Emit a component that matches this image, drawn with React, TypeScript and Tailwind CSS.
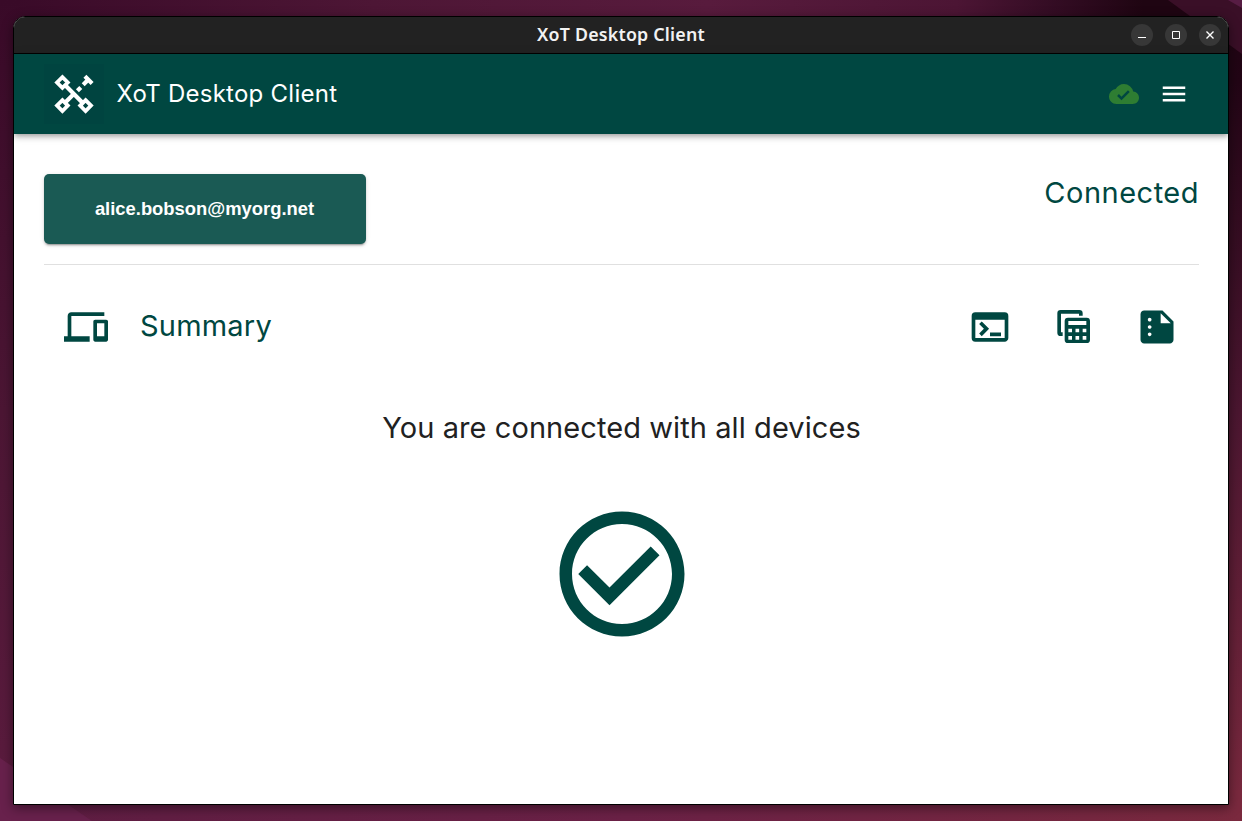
import type { ReactNode } from "react";
import {
  MdCloudDone,
  MdMenu,
  MdOutlineDevices,
  MdOutlineTerminal,
  MdSummarize,
  MdCheckCircleOutline,
} from "react-icons/md";

function Logo() {
  return (
    <svg width="60" height="60" viewBox="0 0 60 60" className="bg-[#004440]" fill="none" stroke="#fff">
      <g strokeWidth="3.8">
        <path d="m18.4 13.100 5.400 5.400-5.400 5.400-5.400-5.400z" />
        <path d="m18.4 36.200 5.400 5.400-5.400 5.400-5.400-5.400z" />
        <path d="m41.600 36.200 5.400 5.400-5.400 5.400-5.400-5.400z" />
      </g>
      <path d="m22 22.1 15.8 15.8M22 37.8l8-8" strokeWidth="4.2" />
      <path d="m33.400 26.800 3.4-3.4M39.200 20.7l5-5M40.900 12.2l7.2 7.2" strokeWidth="4.2" />
    </svg>
  );
}

function TableCopyIcon() {
  return (
    <svg width="34" height="34" viewBox="0 0 102 102" fill="currentColor">
      <path d="M77 17V10Q77 0 67 0H11Q1 0 1 10V68Q1 78 11 78H17V67H12V11H66V17Z" />
      <path
        fillRule="evenodd"
        d="M33 23H89Q99 23 99 33V89Q99 99 89 99H33Q23 99 23 89V33Q23 23 33 23ZM34 33V45H88V33ZM34 56V67H45V56ZM55.500 56V67H66.500V56ZM77 56V67H88V56ZM34 78V89H45V78ZM55.500 78V89H66.500V78ZM77 78V89H88V78Z"
      />
    </svg>
  );
}

function WindowButton({ children }: { children: ReactNode }) {
  return (
    <button className="flex h-[22px] w-[22px] items-center justify-center rounded-full bg-[#373737]">
      <svg width="10" height="10" viewBox="0 0 10 10" fill="none" stroke="#fff">
        {children}
      </svg>
    </button>
  );
}

function TitleBar() {
  return (
    <div className="grid h-[37px] shrink-0 grid-cols-[1fr_auto_1fr] items-center border-b border-black bg-[#222] px-[7px]">
      <span />
      <span className="pb-0.5 font-['Noto_Sans',sans-serif] text-[17.8px] leading-6 font-semibold tracking-[0.22px] text-[#f2f2f2]">
        XoT Desktop Client
      </span>
      <div className="flex justify-end gap-3">
        <WindowButton>
          <path d="M1 7.5h8" />
        </WindowButton>
        <WindowButton>
          <path d="M1.5 1.5h7v7h-7z" />
        </WindowButton>
        <WindowButton>
          <path d="m1.5 1.5 7 7m0-7-7 7" strokeWidth="1.4" />
        </WindowButton>
      </div>
    </div>
  );
}

function Wallpaper() {
  return (
    <svg className="absolute inset-0" width="1242" height="821" viewBox="0 0 1242 821">
      <defs>
        <linearGradient id="top" x1="0" x2="1" y1="0" y2="0">
          <stop offset="0" stopColor="#390a28" />
          <stop offset=".3" stopColor="#4d1635" />
          <stop offset=".57" stopColor="#581b3d" />
          <stop offset=".77" stopColor="#4c1534" />
          <stop offset=".85" stopColor="#330c23" />
          <stop offset=".92" stopColor="#1f0512" />
          <stop offset="1" stopColor="#1f0512" />
        </linearGradient>
        <linearGradient id="left" x1="0" x2="0" y1="0" y2="1">
          <stop offset="0" stopColor="#390a28" />
          <stop offset=".5" stopColor="#4c1634" />
          <stop offset="1" stopColor="#5c1c3f" />
        </linearGradient>
        <linearGradient id="right" x1="0" x2="0" y1="0" y2="1">
          <stop offset="0" stopColor="#1f0512" />
          <stop offset=".1" stopColor="#220515" />
          <stop offset=".5" stopColor="#4b1630" />
          <stop offset="1" stopColor="#7a293e" />
        </linearGradient>
        <linearGradient id="bottom" x1="0" x2="1" y1="0" y2="0">
          <stop offset="0" stopColor="#5e1d42" />
          <stop offset=".5" stopColor="#6b2146" />
          <stop offset="1" stopColor="#7a293e" />
        </linearGradient>
      </defs>
      <path d="M0 0h1242v40H0z" fill="url(#top)" />
      <path d="M0 0h20v821H0z" fill="url(#left)" />
      <path d="M1220 0h22v821h-22z" fill="url(#right)" />
      <path d="M13 790h1229v31H13z" fill="url(#bottom)" />
      <path d="M0 758 92 821H0z" fill="#68214c" />
      <path d="M1168 0h74v54z" fill="#3a0f27" />
      <path d="M1228 0h14v8z" fill="#571c43" />
    </svg>
  );
}

export default function App() {
  return (
    <div className="relative h-[821px] w-[1242px] overflow-hidden bg-[#4d1735] px-[13px] pt-4 font-['Inter',sans-serif]">
      <Wallpaper />

      <div className="relative flex h-[789px] w-[1216px] flex-col overflow-hidden rounded-t-xl border border-black bg-white shadow-[0_3px_12px_rgba(0,0,0,0.45)]">
        <TitleBar />

        <header className="relative flex h-20 shrink-0 items-center bg-[#004741] pr-[39px] pl-[30px] text-white shadow-[0_2px_4px_-1px_rgba(0,0,0,0.2),0_4px_5px_0_rgba(0,0,0,0.14),0_1px_10px_0_rgba(0,0,0,0.12)]">
          <Logo />
          <h1 className="ml-[12.5px] text-[24px] tracking-[0.25px]">XoT Desktop Client</h1>
          <div className="ml-auto flex items-center gap-5">
            <MdCloudDone size={30} className="text-[#2e7d32]" />
            <MdMenu size={30} />
          </div>
        </header>

        <main className="pt-10 pr-[29px] pl-[30px] text-[#004741]">
          <div className="flex h-[91px] justify-between border-b border-[#e0e0e0]">
            <button className="h-[70px] w-[322px] rounded-[5px] bg-[#1a5a54] pr-px font-['Liberation_Sans',sans-serif] text-[18.4px] font-bold text-white shadow-[0_3px_1px_-2px_rgba(0,0,0,0.2),0_2px_2px_0_rgba(0,0,0,0.14),0_1px_5px_0_rgba(0,0,0,0.12)]">
              alice.bobson@myorg.net
            </button>
            <span className="text-[29px] leading-[38px] tracking-[0.5px]">Connected</span>
          </div>

          <div className="mt-[35px] flex h-[53px] items-center pr-5 pl-5">
            <MdOutlineDevices size={44} />
            <h2 className="ml-8 pb-0.5 text-[29px] tracking-[0.2px]">Summary</h2>
            <div className="ml-auto flex items-center">
              <MdOutlineTerminal size={44} className="mr-[45px]" />
              <TableCopyIcon />
              <MdSummarize size={44} className="ml-11" />
            </div>
          </div>

          <p className="mt-[51px] text-center text-[29px] leading-[48px] tracking-[0.08px] text-[#212121]">
            You are connected with all devices
          </p>
          <MdCheckCircleOutline size={150} className="mx-auto mt-[47px]" />
        </main>
      </div>
    </div>
  );
}
